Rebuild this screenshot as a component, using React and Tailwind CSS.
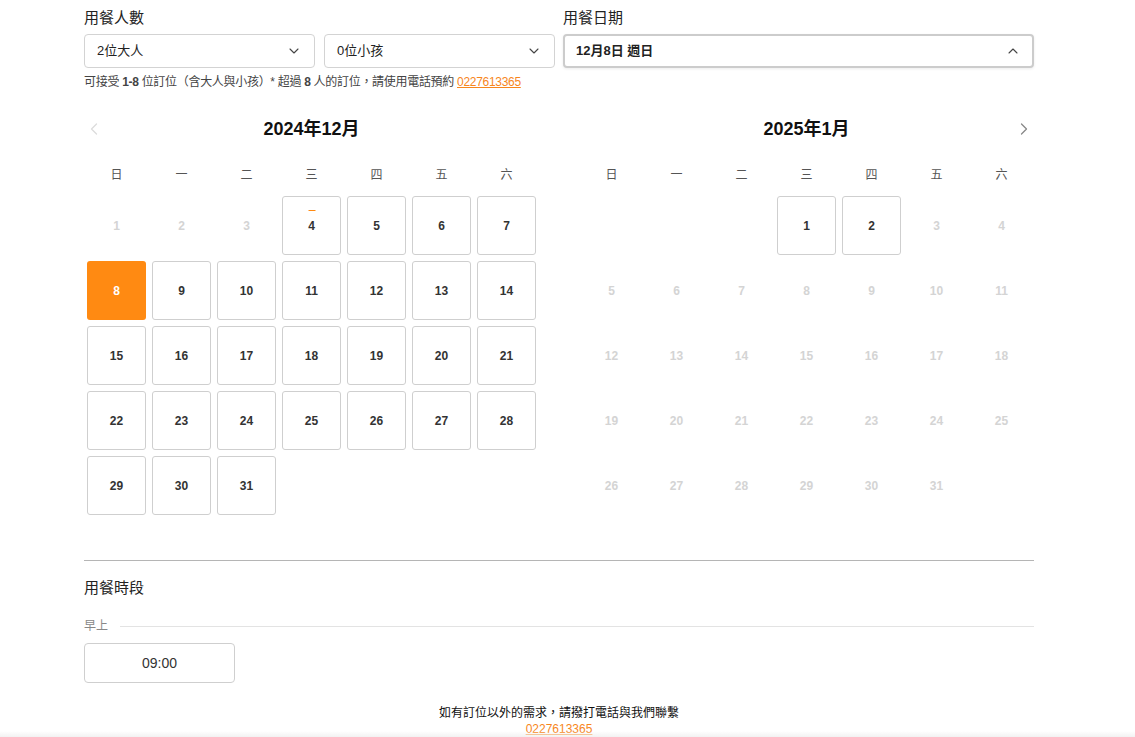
import React from "react";
import { ChevronDown, ChevronUp, ChevronLeft, ChevronRight } from "lucide-react";

const FONT = "font-['Liberation_Sans','Noto_Sans_CJK_TC',sans-serif]";
const WEEK = ["日", "一", "二", "三", "四", "五", "六"];

function range(a, b) {
  const out = [];
  for (let i = a; i <= b; i++) out.push(i);
  return out;
}

function DayCell({ day, state, today }) {
  if (!day) return <div className="h-[65px] p-[3px]" />;
  if (state === "selected") {
    return (
      <div className="h-[65px] p-[3px]">
        <div className="w-full h-full rounded-[3px] bg-[#ff8a12] flex items-center justify-center text-[12px] font-bold text-white">
          {day}
        </div>
      </div>
    );
  }
  if (state === "open") {
    return (
      <div className="h-[65px] p-[3px]">
        <div className="relative w-full h-full rounded-[3px] border border-[#cfcfcf] bg-white flex items-center justify-center text-[12px] font-bold text-[#333]">
          {today && <span className="absolute left-1/2 top-[13px] -translate-x-1/2 w-[7px] h-px bg-[#ff8a12]" />}
          {day}
        </div>
      </div>
    );
  }
  return (
    <div className="h-[65px] p-[3px] flex items-center justify-center text-[12px] font-bold text-[#d4d4d4]">
      {day}
    </div>
  );
}

function Month({ title, offset, days, getState, prev, next }) {
  const cells = [...Array(offset).fill(null), ...days];
  return (
    <div className="w-[455px]">
      <div className="relative h-[28px] flex items-center justify-center">
        {prev && (
          <ChevronLeft size={20} strokeWidth={1.5} className="absolute left-0 text-[#dcdcdc]" />
        )}
        <span className="text-[18px] font-bold text-[#111]">{title}</span>
        {next && (
          <ChevronRight size={20} strokeWidth={1.5} className="absolute right-0 text-[#888]" />
        )}
      </div>
      <div className="grid grid-cols-7 mt-[23px] h-[18px] items-center">
        {WEEK.map((w) => (
          <div key={w} className="text-center text-[12px] text-[#555] leading-[18px]">
            {w}
          </div>
        ))}
      </div>
      <div className="grid grid-cols-7 mt-[9px]">
        {cells.map((d, i) => (
          <DayCell key={i} day={d} state={d ? getState(d) : null} today={title === "2024年12月" && d === 4} />
        ))}
      </div>
    </div>
  );
}

function Select({ label, up, bold, focus }) {
  return (
    <div
      className={
        "h-[34px] rounded-[4px] bg-white flex items-center justify-between " +
        (focus ? "border-2 border-[#cccccc] shadow-[0_1px_3px_rgba(0,0,0,0.08)] px-[11px]" : "border border-[#d3d3d3] px-3")
      }
    >
      <span className={"text-[13px] text-[#222] " + (bold ? "font-bold" : "")}>{label}</span>
      {up ? (
        <ChevronUp size={16} strokeWidth={1.6} className="text-[#444]" />
      ) : (
        <ChevronDown size={16} strokeWidth={1.6} className="text-[#444]" />
      )}
    </div>
  );
}

export default function App() {
  return (
    <div className={FONT + " bg-white min-h-[737px] text-[#222]"}>
      <div className="w-[950px] ml-[84px] pt-[6px]">
        {/* 人數 & 日期 */}
        <div className="grid grid-cols-2 gap-2">
          <div>
            <div className="text-[15px] leading-[24px] mb-1">用餐人數</div>
            <div className="grid grid-cols-2 gap-[9px]">
              <Select label="2位大人" />
              <Select label="0位小孩" />
            </div>
            <div className="mt-[5px] text-[12px] leading-[18px] text-[#444] whitespace-nowrap tracking-[-0.3px]">
              可接受 <b>1-8</b> 位訂位（含大人與小孩）* 超過 <b>8</b> 人的訂位，請使用電話預約{" "}
              <span className="text-[#f7861c] underline">0227613365</span>
            </div>
          </div>
          <div>
            <div className="text-[15px] leading-[24px] mb-1">用餐日期</div>
            <Select label="12月8日 週日" up bold focus />
          </div>
        </div>

        {/* 月曆 */}
        <div className="flex justify-between mt-[24px]">
          <Month
            title="2024年12月"
            offset={0}
            days={range(1, 31)}
            prev
            getState={(d) => (d === 8 ? "selected" : d >= 4 ? "open" : "off")}
          />
          <Month
            title="2025年1月"
            offset={3}
            days={range(1, 31)}
            next
            getState={(d) => (d <= 2 ? "open" : "off")}
          />
        </div>

        <div className="mt-[42px] h-px bg-[#b5b5b5]" />

        {/* 時段 */}
        <div className="mt-[15px] text-[15px] leading-[24px]">用餐時段</div>
        <div className="mt-[17px] flex items-center gap-3">
          <span className="text-[12px] leading-[18px] text-[#888]">早上</span>
          <div className="flex-1 h-px bg-[#e3e3e3]" />
        </div>
        <button className="mt-[8px] w-[151px] h-[40px] rounded-[4px] border border-[#cfcfcf] bg-white text-[14px] text-[#333]">
          09:00
        </button>

        <div className="mt-[22px] text-center text-[12px] leading-[16px] text-[#111]">
          <div>如有訂位以外的需求，請撥打電話與我們聯繫</div>
          <div className="text-[#f7861c] underline">0227613365</div>
        </div>
      </div>
      <div className="fixed left-0 right-0 bottom-0 h-[6px] bg-gradient-to-b from-transparent to-[#f2f2f2]" />
    </div>
  );
}
